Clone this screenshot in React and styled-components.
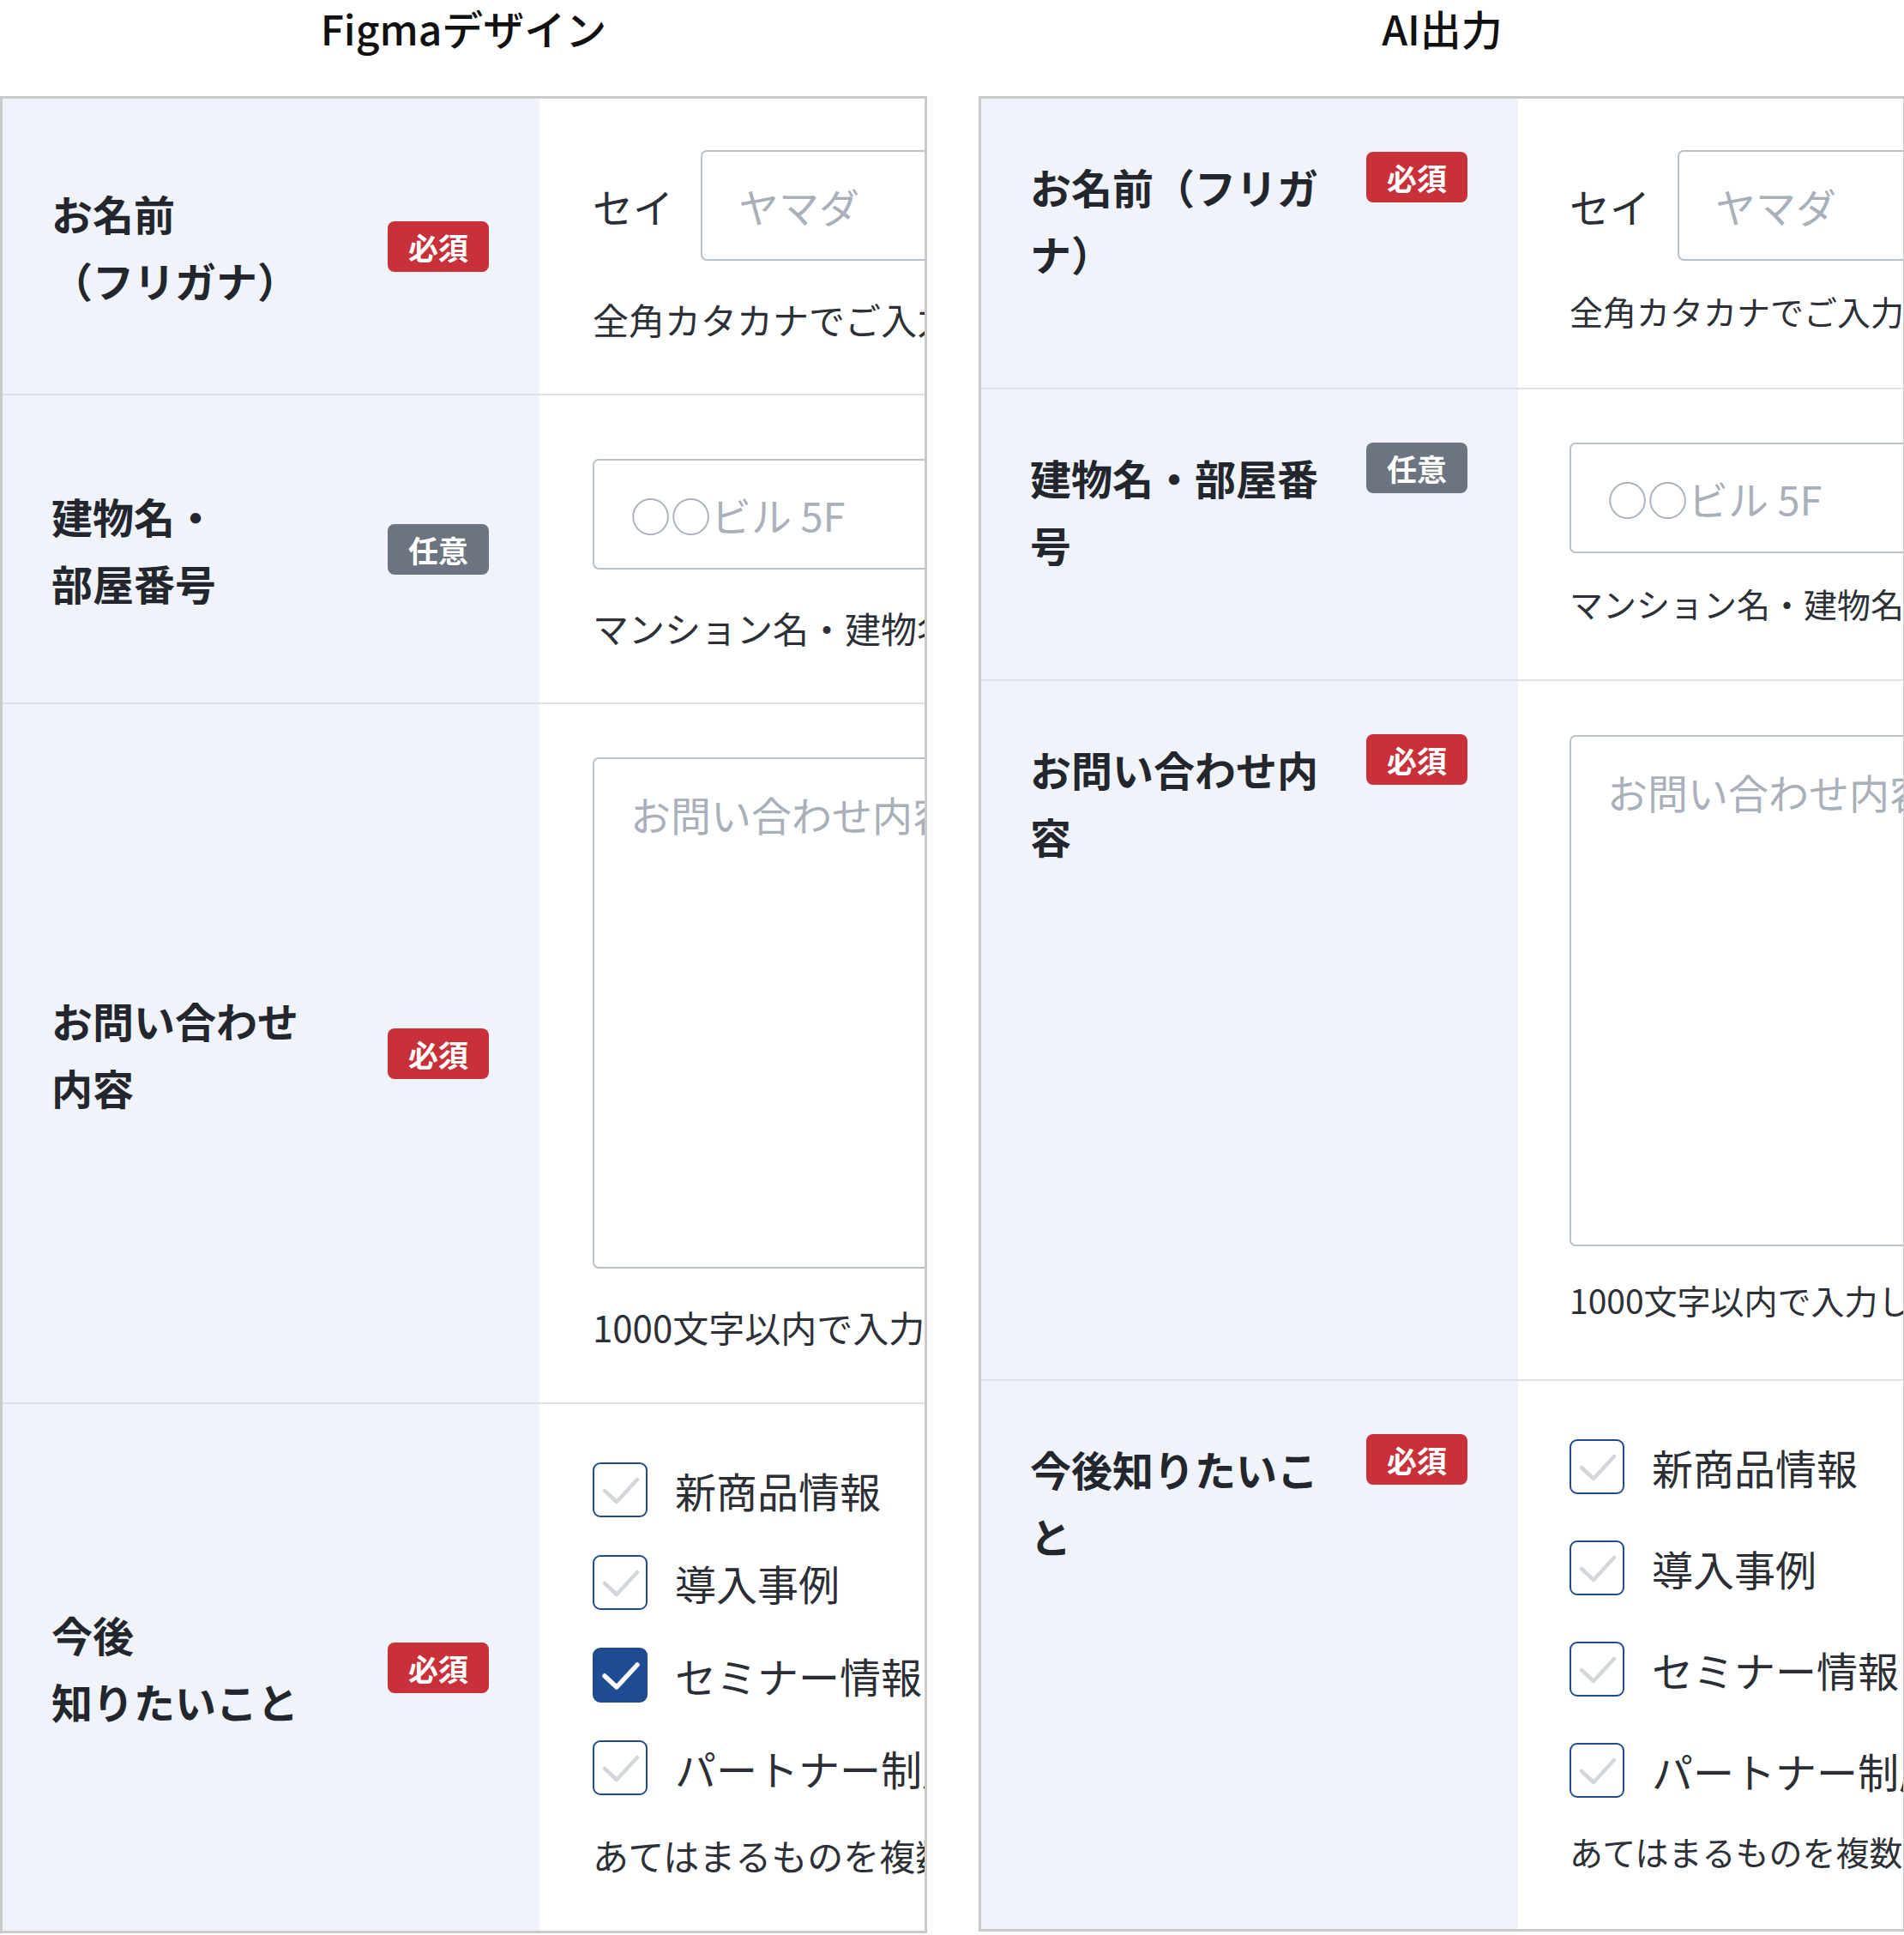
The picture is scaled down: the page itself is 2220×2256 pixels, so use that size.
import React from 'react';
import styled, { createGlobalStyle } from 'styled-components';

const GlobalStyle = createGlobalStyle`
  html, body {
    margin: 0;
    padding: 0;
    background: #fff;
  }
  body {
    width: 2220px;
    height: 2256px;
    overflow: hidden;
    font-family: "Noto Sans CJK JP", "Noto Sans", sans-serif;
    color: #24282e;
  }
`;

const FIELDS = [
  { key: 'kana', lines: ['お名前', '（フリガナ）'], badge: 'req', kind: 'kana', help: '全角カタカナでご入力ください' },
  { key: 'bldg', lines: ['建物名・', '部屋番号'], badge: 'opt', kind: 'input', placeholder: '○○ビル 5F', help: 'マンション名・建物名・部屋番号をご入力ください' },
  { key: 'body', lines: ['お問い合わせ', '内容'], badge: 'req', kind: 'textarea', placeholder: 'お問い合わせ内容を入力してください', help: '1000文字以内で入力してください' },
  { key: 'want', lines: ['今後', '知りたいこと'], badge: 'req', kind: 'check', help: 'あてはまるものを複数選択してください' },
];

const OPTIONS = ['新商品情報', '導入事例', 'セミナー情報', 'パートナー制度'];

// row heights (incl. divider) and top padding of the field cell, per version
const LAYOUT = {
  figma: { heights: [346, 360, 816, 614], tops: [60, 74, 62, 68], helpGap: [38, 38, 38, 40], checkGap: 44 },
  ai: { heights: [339, 340, 816, 639], tops: [60, 62, 63, 68], helpGap: [30, 30, 34, 34], checkGap: 54 },
};

const Page = styled.div`
  display: flex;
  gap: 60px;
  align-items: flex-start;
`;

const Column = styled.section`
  width: 1081px;
  flex-shrink: 0;
`;

const Title = styled.h2`
  margin: 0 0 48px;
  height: 64px;
  line-height: 64px;
  text-align: center;
  font-size: 48px;
  font-weight: 500;
  color: #111;
`;

const Panel = styled.div`
  width: 1081px;
  box-sizing: border-box;
  border: 3px solid #cacaca;
  overflow: hidden;
  background: #fff;
`;

const Row = styled.div`
  display: grid;
  grid-template-columns: 626px 1fr;
  height: ${p => p.$h}px;
  box-sizing: border-box;
  border-bottom: ${p => (p.$last ? 'none' : '2px solid #dfe3e8')};
`;

const LabelCell = styled.div`
  background: #f0f4fa;
  display: flex;
  justify-content: space-between;
  align-items: ${p => (p.$ai ? 'flex-start' : 'center')};
  gap: 28px;
  padding: ${p => (p.$ai ? '62px 59px 0 57px' : '0 59px 0 57px')};
`;

const LabelText = styled.div`
  font-size: 48px;
  font-weight: 700;
  line-height: 78px;
  color: #23272d;
  margin-top: ${p => (p.$ai ? '1px' : '0')};
  flex: ${p => (p.$ai ? '1' : '0 1 auto')};
`;

const Badge = styled.span`
  flex-shrink: 0;
  width: 118px;
  height: 59px;
  border-radius: 8px;
  background: ${p => (p.$opt ? '#6b7480' : '#c8303a')};
  color: #fff;
  font-size: 35px;
  font-weight: 700;
  display: flex;
  align-items: center;
  justify-content: center;
`;

const FieldCell = styled.div`
  padding: ${p => p.$top}px 0 0 ${p => (p.$ai ? 60 : 62)}px;
  min-width: 0;
  overflow: hidden;
`;

const InlineField = styled.div`
  display: flex;
  align-items: center;
  gap: 32px;
`;

const SubLabel = styled.span`
  font-size: 47px;
  color: #2b2f35;
  white-space: nowrap;
`;

const TextInput = styled.input`
  flex-shrink: 0;
  width: 620px;
  height: 129px;
  box-sizing: border-box;
  border: 2px solid #b9c1cc;
  border-radius: 7px;
  padding: 0 42px;
  font-family: inherit;
  font-size: 47px;
  color: #24282e;
  background: #fff;
  outline: none;
  &::placeholder {
    color: #a9b0ba;
  }
`;

const TextArea = styled.textarea`
  display: block;
  width: 640px;
  height: 596px;
  box-sizing: border-box;
  border: 2px solid #b9c1cc;
  border-radius: 7px;
  padding: 32px 42px;
  font-family: inherit;
  font-size: 47px;
  line-height: 64px;
  resize: none;
  outline: none;
  white-space: nowrap;
  overflow: hidden;
  &::placeholder {
    color: #a9b0ba;
  }
`;

const Help = styled.p`
  margin: ${p => p.$gap}px 0 0;
  font-size: ${p => (p.$ai ? 39 : 42)}px;
  line-height: ${p => (p.$ai ? 56 : 60)}px;
  color: #2d3137;
  white-space: nowrap;
`;

const CheckList = styled.div`
  display: flex;
  flex-direction: column;
  gap: ${p => p.$gap}px;
`;

const CheckItem = styled.label`
  display: flex;
  align-items: center;
  gap: 32px;
  height: 64px;
  white-space: nowrap;
  font-size: 48px;
  color: #2b2f35;
`;

const Box = styled.span`
  flex-shrink: 0;
  width: 64px;
  height: 64px;
  box-sizing: border-box;
  border-radius: 9px;
  border: 2.5px solid #224b8f;
  background: ${p => (p.$on ? '#1e4b91' : '#fff')};
  display: flex;
  align-items: center;
  justify-content: center;
`;

const Check = ({ on }) => (
  <Box $on={on}>
    <svg width="60" height="60" viewBox="0 0 60 60">
      <path
        d="M12 31 L26 44 L50 18"
        fill="none"
        stroke={on ? '#fff' : '#d3d7dd'}
        strokeWidth={on ? 5.5 : 4.5}
        strokeLinecap="round"
        strokeLinejoin="round"
      />
    </svg>
  </Box>
);

function Field({ field, ai, idx, layout }) {
  const gap = layout.helpGap[idx];
  return (
    <FieldCell $ai={ai} $top={layout.tops[idx]}>
      {field.kind === 'kana' && (
        <InlineField>
          <SubLabel>セイ</SubLabel>
          <TextInput placeholder="ヤマダ" readOnly />
        </InlineField>
      )}
      {field.kind === 'input' && <TextInput placeholder={field.placeholder} readOnly />}
      {field.kind === 'textarea' && <TextArea placeholder={field.placeholder} readOnly />}
      {field.kind === 'check' && (
        <CheckList $gap={layout.checkGap}>
          {OPTIONS.map(o => (
            <CheckItem key={o}>
              <Check on={!ai && o === 'セミナー情報'} />
              {o}
            </CheckItem>
          ))}
        </CheckList>
      )}
      <Help $ai={ai} $gap={gap}>{field.help}</Help>
    </FieldCell>
  );
}

function FormTable({ ai }) {
  const layout = ai ? LAYOUT.ai : LAYOUT.figma;
  return (
    <Panel>
      {FIELDS.map((f, i) => (
        <Row key={f.key} $h={layout.heights[i]} $last={i === FIELDS.length - 1}>
          <LabelCell $ai={ai}>
            <LabelText $ai={ai}>
              {ai
                ? f.lines.join('')
                : f.lines.map((l, j) => (
                    <React.Fragment key={j}>
                      {j > 0 && <br />}
                      {l}
                    </React.Fragment>
                  ))}
            </LabelText>
            <Badge $opt={f.badge === 'opt'}>{f.badge === 'opt' ? '任意' : '必須'}</Badge>
          </LabelCell>
          <Field field={f} ai={ai} idx={i} layout={layout} />
        </Row>
      ))}
    </Panel>
  );
}

export default function App() {
  return (
    <>
      <GlobalStyle />
      <Page>
        <Column>
          <Title>Figmaデザイン</Title>
          <FormTable />
        </Column>
        <Column>
          <Title>AI出力</Title>
          <FormTable ai />
        </Column>
      </Page>
    </>
  );
}
